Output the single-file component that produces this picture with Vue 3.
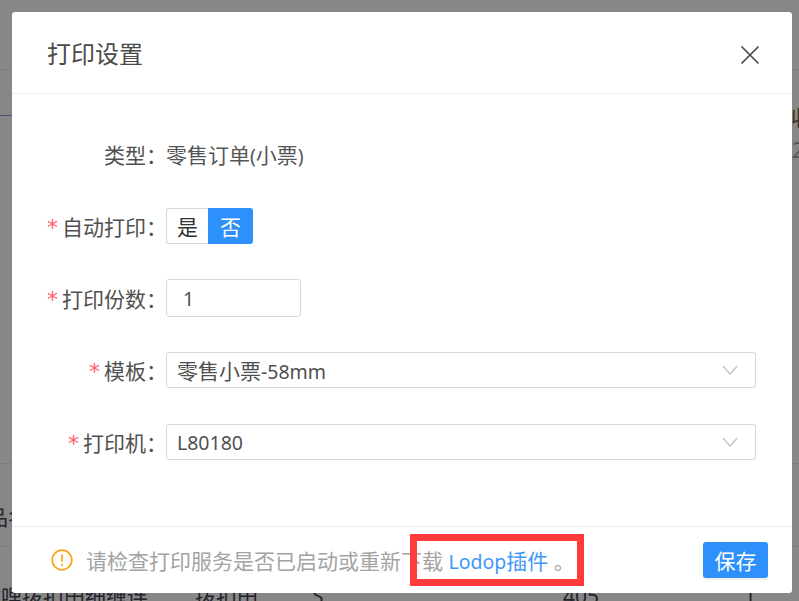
<script setup>
const rows = [
  { label: '自动打印', required: true, kind: 'toggle' },
  { label: '打印份数', required: true, kind: 'number', value: '1' },
  { label: '模板', required: true, kind: 'select', cjk: '零售小票', value: '-58mm' },
  { label: '打印机', required: true, kind: 'select', cjk: '', value: 'L80180' }
]
</script>

<template>
  <div class="screen">
    <div class="under">
      <i class="line l1"></i><i class="line l2"></i><i class="line l3"></i><i class="line l4"></i><i class="line l5"></i>
      <span class="bg-text t1">收</span>
      <span class="bg-text t2">2</span>
      <span class="bg-text t3">品名</span>
      <span class="bg-text t4">微哩拨扣田细缠连</span>
      <span class="bg-text t5">拨扣田</span>
      <span class="bg-text t6">S</span>
      <span class="bg-text t7">405</span>
      <span class="bg-text t8">1</span>
    </div>
    <section class="modal">
      <header class="head">
        <h2>打印设置</h2>
        <svg class="close" width="20" height="20" viewBox="0 0 20 20" fill="none" stroke="#4a4a4a" stroke-width="1.7">
          <path d="M1.5 1.5 18.5 18.5M18.5 1.5 1.5 18.5" />
        </svg>
      </header>
      <div class="body">
        <div class="row">
          <div class="label">类型：</div>
          <div class="plain">零售订单<span class="lat">(</span>小票<span class="lat">)</span></div>
        </div>
        <div v-for="r in rows" :key="r.label" class="row">
          <div class="label"><span class="star">*</span>{{ r.label }}：</div>
          <div v-if="r.kind === 'toggle'" class="toggle">
            <span class="opt">是</span><span class="opt on">否</span>
          </div>
          <div v-else-if="r.kind === 'number'" class="number"><span class="lat">{{ r.value }}</span></div>
          <div v-else class="select">
            <span>{{ r.cjk }}<span class="lat">{{ r.value }}</span></span>
            <svg width="16" height="10" viewBox="0 0 16 10" fill="none" stroke="#c4c4c4" stroke-width="1.3">
              <path d="M.8 1 8 9 15.2 1" />
            </svg>
          </div>
        </div>
      </div>
      <footer class="foot">
        <svg class="warn" width="22" height="22" viewBox="0 0 22 22" fill="none">
          <circle cx="11" cy="11" r="9.8" stroke="#faa61a" stroke-width="1.7" />
          <path d="M11 5.6v7.2" stroke="#faa61a" stroke-width="1.8" />
          <circle cx="11" cy="15.8" r="1.1" fill="#faa61a" />
        </svg>
        <p class="msg">请检查打印服务是否已启动或重新下载 <a><span class="lat">Lodop</span>插件</a> 。</p>
        <button class="save">保存</button>
        <div class="mark"></div>
      </footer>
    </section>
  </div>
</template>

<style>
html, body { margin: 0; background: #888; }
</style>

<style scoped>
.screen {
  position: relative;
  width: 799px;
  height: 601px;
  overflow: hidden;
  padding: 12px 7px 8px 12px;
  box-sizing: border-box;
  background: #878787;
  font-family: "Noto Sans", "Noto Sans CJK SC", sans-serif;
  font-size: 21px;
  color: #4f4f4f;
}
.lat { font-size: 19.5px; }
.under { position: absolute; inset: 0; }
.line { position: absolute; left: 0; right: 0; height: 1px; background: #7d7d7d; }
.l1 { top: 69px; }
.l2 { top: 115px; background: #44546a; right: 780px; }
.l3 { top: 463px; }
.l4 { top: 546px; }
.l5 { top: 157px; left: 792px; background: #5a5668; }
.bg-text { position: absolute; color: #23232c; font-size: 21px; line-height: 24px; white-space: nowrap; }
.t1 { left: 791px; top: 105px; color: #3a3320; }
.t2 { left: 792px; top: 138px; color: #555; }
.t3 { left: -13px; top: 505px; }
.t4 { left: -20px; top: 584px; }
.t5 { left: 195px; top: 584px; }
.t6 { left: 312px; top: 584px; }
.t7 { left: 563px; top: 584px; }
.t8 { left: 744px; top: 584px; }
.modal {
  position: relative;
  height: 581px;
  display: flex;
  flex-direction: column;
  background: #fff;
  border-radius: 3px;
}
.head {
  height: 81px;
  flex: none;
  display: flex;
  align-items: center;
  justify-content: space-between;
  padding: 0 32px 0 35px;
  border-bottom: 1px solid #eeeeee;
}
h2 { margin: 0 0 1px; font-size: 24px; font-weight: 400; color: #4a4a4a; }
.close { margin-top: 5px; }
.body { flex: 1; padding-top: 42px; }
.row { display: flex; align-items: center; height: 36px; margin-bottom: 36px; }
.label { width: 155px; margin-right: -1px; flex: none; text-align: right; white-space: nowrap; color: #505050; }
.star { color: #ff5a64; margin-right: 4px; font-family: "DejaVu Sans", sans-serif; font-size: 22px; line-height: 1; }
.plain { color: #555; }
.toggle { display: flex; height: 36px; }
.opt { width: 42px; display: flex; align-items: center; justify-content: center; border: 1px solid #d9d9d9; border-right: 0; border-radius: 3px 0 0 3px; box-sizing: border-box; color: #333; }
.opt.on { width: 45px; background: #2d90fb; border: 0; border-radius: 0 3px 3px 0; color: #fff; }
.number {
  width: 135px; height: 38px; box-sizing: border-box; flex: none;
  border: 1px solid #d9d9d9; border-radius: 3px;
  display: flex; align-items: center; padding-left: 16px;
}
.select {
  width: 590px; height: 36px; box-sizing: border-box;
  border: 1px solid #d9d9d9; border-radius: 3px;
  display: flex; align-items: center; justify-content: space-between;
  padding: 0 17px 0 10px;
}
.foot {
  position: relative;
  height: 66px;
  flex: none;
  display: flex;
  align-items: center;
  padding: 0 24px 0 39px;
  border-top: 1px solid #eeeeee;
}
.warn { flex: none; margin-right: 13px; margin-top: -1px; }
.msg { flex: 1; margin: 0 0 1px; color: #a3a3a3; white-space: nowrap; font-size: 21px; }
.msg a { color: #3f98f8; }
.save {
  width: 65px; height: 36px; flex: none; padding: 0;
  border: 0; border-radius: 3px;
  background: #2d90fb; color: #fff;
  font: inherit; font-size: 21px;
  box-shadow: 0 2px 0 rgba(0,0,0,.05);
}
.mark {
  position: absolute;
  left: 398px; top: 7px;
  width: 160px; height: 38px;
  border: 7px solid #ff3b3b;
}
</style>
